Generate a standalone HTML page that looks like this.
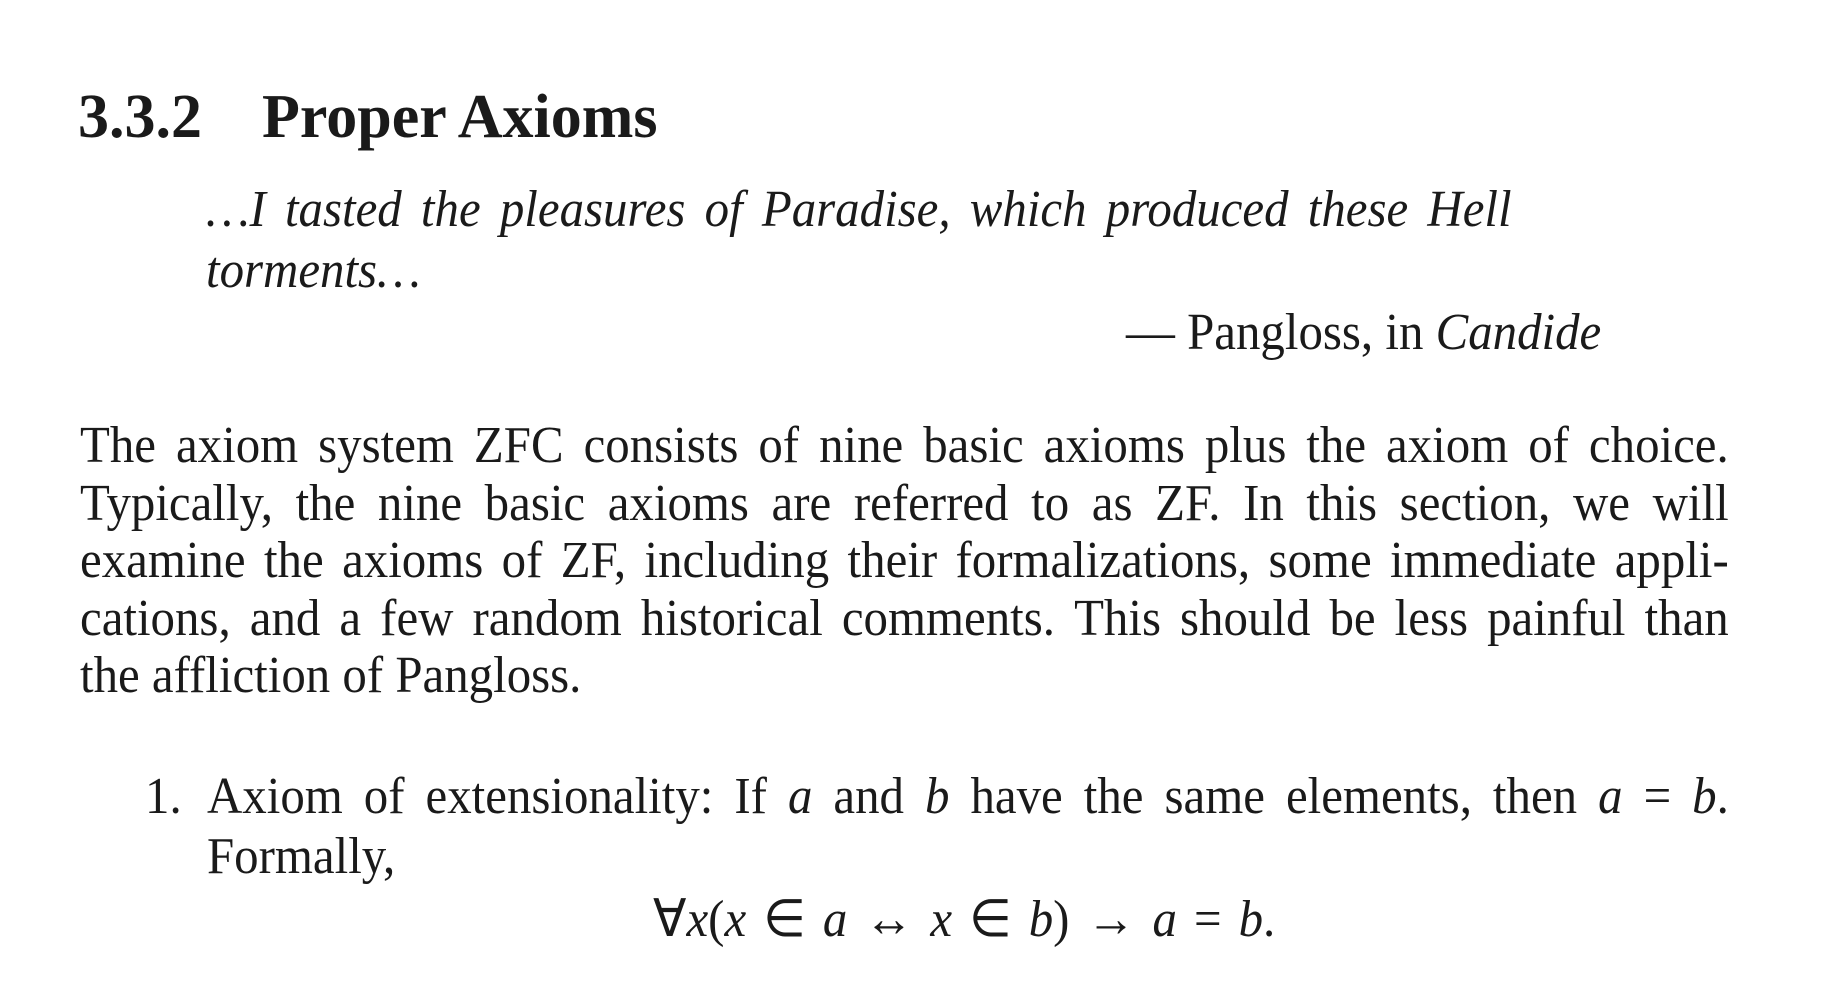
<!DOCTYPE html>
<html><head><meta charset="utf-8"><style>
html,body{margin:0;padding:0;background:#fff;}
body{width:1837px;height:981px;position:relative;overflow:hidden;font-family:"Liberation Serif",serif;color:#1a1a1a;}
.l{position:absolute;white-space:nowrap;line-height:1.107em;transform:scaleX(.94);transform-origin:0 0;}
.h{position:absolute;white-space:nowrap;line-height:1.107em;}
.f{position:absolute;white-space:nowrap;line-height:1.107em;display:flex;justify-content:space-between;transform:scaleX(.94);transform-origin:0 0;}
.i{font-style:italic;}
</style></head><body>
<div class="h" style="left:78px;top:83px;font-size:62px;font-weight:bold;">3.3.2</div>
<div class="h" style="left:262px;top:83px;font-size:62px;font-weight:bold;">Proper Axioms</div>

<div class="f i" style="left:206px;top:181px;width:1389px;font-size:52px;"><span>…I</span><span>tasted</span><span>the</span><span>pleasures</span><span>of</span><span>Paradise,</span><span>which</span><span>produced</span><span>these</span><span>Hell</span></div>
<div class="l i" style="left:206px;top:242px;font-size:52px;">torments…</div>
<div class="l" style="left:1126px;top:304px;font-size:52px;">— Pangloss, in <i>Candide</i></div>

<div class="f" style="left:80px;top:417px;width:1754px;font-size:52px;"><span>The</span><span>axiom</span><span>system</span><span>ZFC</span><span>consists</span><span>of</span><span>nine</span><span>basic</span><span>axioms</span><span>plus</span><span>the</span><span>axiom</span><span>of</span><span>choice.</span></div>
<div class="f" style="left:80px;top:475px;width:1754px;font-size:52px;"><span>Typically,</span><span>the</span><span>nine</span><span>basic</span><span>axioms</span><span>are</span><span>referred</span><span>to</span><span>as</span><span>ZF.</span><span>In</span><span>this</span><span>section,</span><span>we</span><span>will</span></div>
<div class="f" style="left:80px;top:532px;width:1754px;font-size:52px;"><span>examine</span><span>the</span><span>axioms</span><span>of</span><span>ZF,</span><span>including</span><span>their</span><span>formalizations,</span><span>some</span><span>immediate</span><span>appli-</span></div>
<div class="f" style="left:80px;top:590px;width:1754px;font-size:52px;"><span>cations,</span><span>and</span><span>a</span><span>few</span><span>random</span><span>historical</span><span>comments.</span><span>This</span><span>should</span><span>be</span><span>less</span><span>painful</span><span>than</span></div>
<div class="l" style="left:80px;top:647px;font-size:52px;">the affliction of Pangloss.</div>

<div class="l" style="left:145px;top:768px;font-size:52px;">1.</div>
<div class="f" style="left:207px;top:768px;width:1619px;font-size:52px;"><span>Axiom</span><span>of</span><span>extensionality:</span><span>If</span><span><i>a</i></span><span>and</span><span><i>b</i></span><span>have</span><span>the</span><span>same</span><span>elements,</span><span>then</span><span><i>a</i></span><span>=</span><span><i>b</i>.</span></div>
<div class="l" style="left:207px;top:828px;font-size:52px;">Formally,</div>
<div class="f" style="left:653px;top:891px;width:662px;font-size:52px;"><span>∀<i>x</i>(<i>x</i></span><span>∈</span><span><i>a</i></span><span>↔</span><span><i>x</i></span><span>∈</span><span><i>b</i>)</span><span>→</span><span><i>a</i></span><span>=</span><span><i>b</i>.</span></div>
</body></html>
